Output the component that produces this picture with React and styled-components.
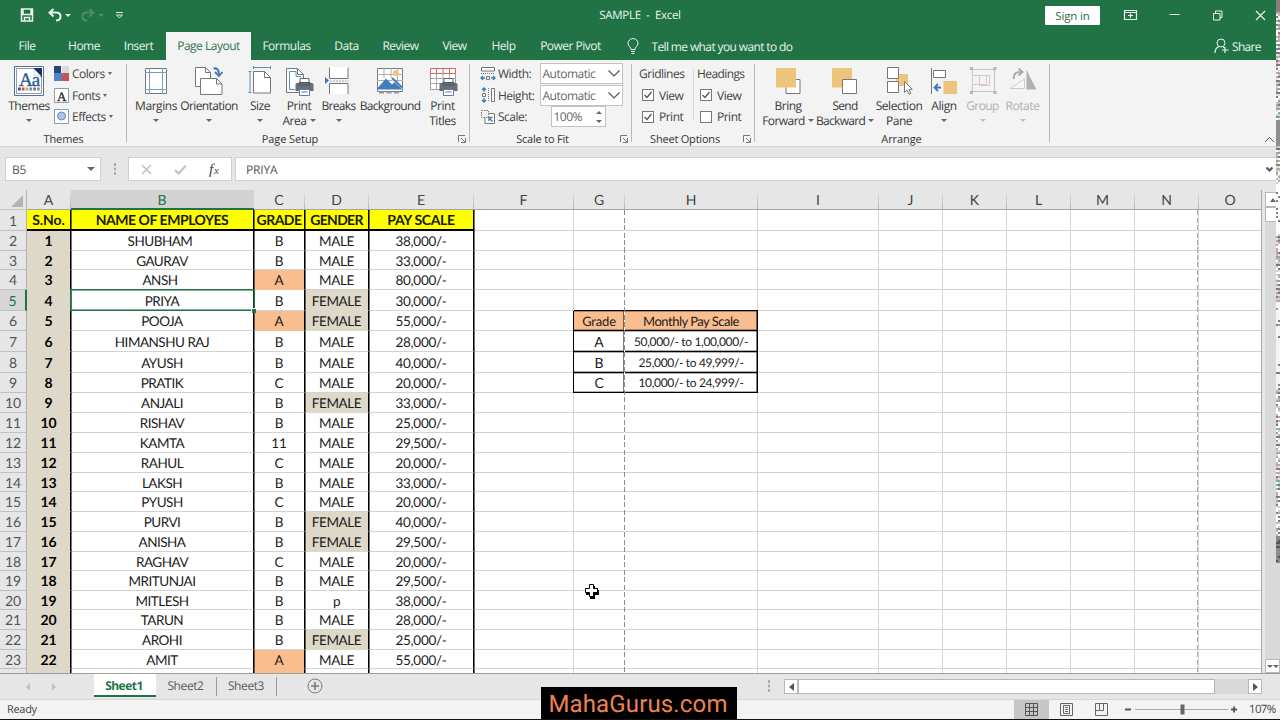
import React from "react";
import styled, { createGlobalStyle, css } from "styled-components";

const ui = `"Open Sans", "Noto Sans", sans-serif`;
const sheetFont = `Lato, "Open Sans", sans-serif`;
const green = "#217346";

const GlobalStyle = createGlobalStyle`
  * {
    box-sizing: border-box;
  }

  html,
  body {
    margin: 0;
    padding: 0;
    overflow: hidden;
  }

  svg {
    display: block;
    flex: none;
  }
`;

const Window = styled.div`
  position: relative;
  width: 1280px;
  height: 720px;
  overflow: hidden;
  display: flex;
  flex-direction: column;
  background: #e6e6e6;
  border-bottom: 1px solid #111;
  font-family: ${ui};
  font-size: 12px;
  color: #333;
  white-space: nowrap;
  text-rendering: geometricPrecision;
`;

/* ---------- title bar ---------- */

const TitleBar = styled.header`
  display: grid;
  grid-template-columns: 560px 160px 1fr;
  align-items: center;
  height: 32px;
  padding-bottom: 2px;
  background: ${green};
  color: #e9f3ec;
`;

const QuickAccess = styled.div`
  display: flex;
  align-items: center;
  padding-left: 20px;
`;

const Title = styled.div`
  text-align: center;
  font-size: 11.5px;
  letter-spacing: -0.3px;
  white-space: pre;
`;

const WindowButtons = styled.div`
  display: flex;
  align-items: center;
  justify-content: flex-end;
  padding-right: 14px;
`;

const SignIn = styled.button`
  width: 55px;
  height: 19px;
  margin-right: 23px;
  padding: 0;
  border: 0;
  border-radius: 1px;
  background: #fff;
  color: #2b6a49;
  font: 11.5px/17px ${ui};
  letter-spacing: -0.15px;
`;

/* ---------- ribbon tabs ---------- */

const TabBar = styled.nav`
  display: flex;
  height: 28px;
  background: ${green};
`;

const Tab = styled.div`
  width: ${(p) => p.$w}px;
  margin-right: ${(p) => p.$gap || 0}px;
  display: flex;
  justify-content: center;
  line-height: 27px;
  letter-spacing: ${(p) => p.$ls ?? -0.5}px;
  color: #e6f2ea;
  ${(p) =>
    p.$active &&
    css`
      background: #f3f3f3;
      color: #35724f;
    `}
`;

const TellMe = styled.div`
  display: flex;
  align-items: center;
  gap: 13px;
  flex: 1;
  padding-left: 13.5px;
  color: #e6f2ea;
  line-height: 27px;
  letter-spacing: -0.63px;
`;

const Share = styled.div`
  display: flex;
  align-items: center;
  gap: 3px;
  width: 66px;
  color: #e6f2ea;
  line-height: 27px;
  letter-spacing: -0.7px;
`;

/* ---------- ribbon ---------- */

const Ribbon = styled.div`
  display: flex;
  height: 87px;
  background: #f3f3f3;
  border-bottom: 1px solid #d4d4d4;
`;

const Group = styled.section`
  position: relative;
  width: ${(p) => p.$w}px;
  display: flex;
  flex-direction: column;
  background: linear-gradient(#b9b9b9, #b9b9b9) right 4px / 1px 78px no-repeat;
`;

const GroupBody = styled.div`
  display: flex;
  height: 71px;
  padding-left: ${(p) => p.$pad ?? 4}px;
`;

const GroupLabel = styled.div`
  height: 15px;
  display: flex;
  justify-content: center;
  padding-right: ${(p) => p.$shift || 0}px;
  font-size: 11px;
  line-height: 17px;
  letter-spacing: ${(p) => p.$ls ?? -0.1}px;
`;

const Launcher = styled.div`
  position: absolute;
  right: 4px;
  bottom: 3px;
`;

const BigButton = styled.div`
  width: ${(p) => p.$w}px;
  flex: none;
  display: flex;
  flex-direction: column;
  align-items: center;
  padding-top: 6px;
  line-height: 15px;
  letter-spacing: ${(p) => p.$ls ?? -0.45}px;
  color: ${(p) => (p.$off ? "#b0b0b0" : "#3a3a3a")};
`;

const ButtonLine = styled.div`
  display: flex;
  align-items: center;
  gap: 3px;
  height: 15px;
`;

const Caret = styled.i`
  flex: none;
  width: 0;
  height: 0;
  border: ${(p) => p.$s || 2.5}px solid transparent;
  border-bottom: 0;
  border-top: ${(p) => (p.$s || 2.5) + 0.5}px solid ${(p) => p.$c || "#666"};
`;

const SmallStack = styled.div`
  width: ${(p) => (p.$w ? `${p.$w}px` : "auto")};
  display: flex;
  flex-direction: column;
  padding-top: 3px;
`;

const SmallRow = styled.div`
  display: flex;
  align-items: center;
  gap: ${(p) => p.$gap ?? 3}px;
  height: 21.5px;
  letter-spacing: ${(p) => p.$ls ?? -0.5}px;
  color: #444;
`;

const Field = styled.div`
  display: flex;
  align-items: center;
  justify-content: space-between;
  width: ${(p) => p.$w || 83}px;
  height: 21px;
  margin-left: ${(p) => p.$ml || 0}px;
  padding: 0 1px 0 1.5px;
  background: #fff;
  border: 1px solid #c3c3c3;
  color: #666;
  letter-spacing: -0.5px;
`;

const Spin = styled.div`
  display: flex;
  flex-direction: column;
  gap: 6px;
  padding-right: 2px;
`;

const OptionColumn = styled.div`
  width: ${(p) => p.$w}px;
  padding: 3px 0 0 ${(p) => p.$pad}px;
`;

const OptionRule = styled.div`
  width: 1px;
  height: 52px;
  margin-top: 9px;
  background: #d9d9d9;
`;

const Box = styled.span`
  width: 12px;
  height: 12px;
  margin-left: 3px;
  margin-right: 2px;
  border: 1px solid #777;
  background: #fff;
`;

const Collapse = styled.div`
  flex: 1;
  display: flex;
  justify-content: flex-end;
  align-items: flex-end;
  padding: 0 5px 3px 0;
`;

/* ---------- formula bar ---------- */

const FormulaBar = styled.div`
  display: flex;
  align-items: center;
  height: 43px;
  padding: 1px 0 0 5px;
`;

const BarBox = styled.div`
  display: flex;
  align-items: center;
  width: ${(p) => p.$w}px;
  height: 24px;
  margin-left: ${(p) => p.$ml || 0}px;
  padding: 0 ${(p) => p.$pr || 5}px 0 ${(p) => p.$pl || 6}px;
  justify-content: space-between;
  background: #fff;
  border: 1px solid #d0d0d0;
  color: #555;
  letter-spacing: -0.2px;
`;

const Dots = styled.div`
  width: ${(p) => p.$w}px;
  height: 12px;
  margin-top: ${(p) => p.$mt || 0}px;
  background: radial-gradient(circle, #a5a5a5 1px, transparent 1.3px) center / 4px 4.5px repeat-y;
`;

/* ---------- sheet ---------- */

const Main = styled.div`
  display: flex;
  height: 483px;
`;

const Sheet = styled.div`
  position: relative;
  width: 1262px;
  height: 483px;
  overflow: hidden;
  border-right: 1px solid #a8a8a8;
`;

const columns = "27px 44px 183px 51px 64px 105px 100px 51px 133px 121px 64px 64px 64px 64px 64px 63px";

const Row = styled.div`
  display: grid;
  grid-template-columns: ${columns};
  height: ${(p) => p.$h}px;
`;

const ColHead = styled.div`
  display: flex;
  align-items: center;
  justify-content: center;
  height: 20px;
  padding-right: 1px;
  background: linear-gradient(#e6e6e6, #b5b5b5) right / 1px 100% no-repeat #e6e6e6;
  border-bottom: 1px solid #a5a5a5;
  color: #444;
  font: 14px ${sheetFont};
  ${(p) =>
    p.$active &&
    css`
      background: #d2d2d2;
      border-bottom: 2px solid ${green};
      color: ${green};
    `}
`;

const Corner = styled.div`
  display: flex;
  justify-content: flex-end;
  align-items: flex-end;
  padding: 0 3px 2px 0;
  height: 20px;
  border-bottom: 1px solid #c3c3c3;
  border-right: 1px solid #b5b5b5;
`;

const RowHead = styled.div`
  display: flex;
  align-items: center;
  justify-content: center;
  padding-top: 1px;
  background: #e6e6e6;
  border-right: 1px solid #b0b0b0;
  border-bottom: 1px solid #c0c0c0;
  color: #555;
  font: 14px/16px ${sheetFont};
  letter-spacing: -0.2px;
  ${(p) =>
    p.$active &&
    css`
      background: #d6d6d6;
      border-right: 2px solid ${green};
      color: ${green};
    `}
`;

const salmon = "#f9be90";
const fills = { A: salmon, FEMALE: "#ddd8c7" };

// $edge and $boxed carry the stacking level, so a heavy line stays above the next cell
const Cell = styled.div`
  display: flex;
  align-items: center;
  justify-content: center;
  min-width: 0;
  height: 100%;
  padding-top: 1px;
  padding-right: ${(p) => p.$shift || 0}px;
  background: ${(p) => p.$fill || "#fff"};
  border-right: 1px solid #d6d6d6;
  border-bottom: 1px solid ${(p) => p.$fill || "#d2d2d2"};
  color: #1c1c1c;
  font: ${(p) => p.$size || 13.5}px/16px ${sheetFont};
  letter-spacing: ${(p) => p.$ls || 0}px;
  ${(p) =>
    p.$edge &&
    css`
      position: relative;
      z-index: ${p.$edge};
      border-right-color: #000;
      box-shadow: 1px 0 0 rgba(0, 0, 0, 0.55);
    `}
  ${(p) =>
    p.$bold &&
    css`
      font-weight: 700;
      font-size: 14px;
      color: #000;
    `}
  ${(p) =>
    p.$head &&
    css`
      background: #ffff00;
      border-bottom: 2px solid #000;
      color: #1a1a00;
    `}
  ${(p) =>
    p.$boxed &&
    css`
      position: relative;
      z-index: ${p.$boxed};
      border-right: 1px solid #000;
      border-bottom: 1px solid #000;
      box-shadow: 0 -1px 0 #000, -1px 0 0 #000, inset 0 1px 0 rgba(0, 0, 0, 0.3), inset -1px 0 0 rgba(0, 0, 0, 0.5),
        inset 0 -1px 0 rgba(0, 0, 0, 0.3);
    `}
`;

const PageBreak = styled.div`
  position: absolute;
  z-index: 6;
  left: ${(p) => p.$x}px;
  top: 20px;
  bottom: 0;
  width: 1px;
  background: repeating-linear-gradient(${(p) => p.$c} 0 5px, #fff 5px 7.5px);
`;

const Selection = styled.div`
  position: absolute;
  z-index: 7;
  left: 70px;
  top: 99px;
  width: 185px;
  height: 22px;
  border: 1px solid ${green};
  box-shadow: inset 0 0 0 1px rgba(33, 115, 70, 0.55);
`;

const FillHandle = styled.div`
  position: absolute;
  z-index: 8;
  left: 251px;
  top: 118px;
  width: 5px;
  height: 5px;
  background: ${green};
  border-left: 1px solid #fff;
  border-top: 1px solid #fff;
`;

const CellCursor = styled.svg`
  position: absolute;
  left: 584px;
  top: 393px;
`;

const VScroll = styled.div`
  display: flex;
  flex-direction: column;
  width: 15px;
  margin: 2px 0 0 3px;
  background: #d9d9d9;
`;

const ScrollPart = styled.div`
  display: flex;
  align-items: center;
  justify-content: center;
  width: ${(p) => p.$w}px;
  height: ${(p) => p.$h}px;
  background: #fff;
  border: 1px solid #b8b8b8;
`;

const Spacer = styled.div`
  flex: 1;
`;

/* ---------- bottom ---------- */

const SheetBar = styled.div`
  display: flex;
  height: 26px;
  border-top: 1px solid #9a9f9a;
`;

const TabArrows = styled.div`
  display: flex;
  align-items: center;
  gap: 22px;
  width: 94px;
  padding-left: 25px;
`;

const SheetTab = styled.div`
  width: ${(p) => p.$w}px;
  height: 24px;
  display: flex;
  justify-content: center;
  padding-right: 2px;
  line-height: 24px;
  letter-spacing: -0.4px;
  color: #5a5a5a;
  background: linear-gradient(#999, #999) right 3px / 1px 19px no-repeat;
  ${(p) =>
    p.$active &&
    css`
      height: 23px;
      background: #fff;
      border-bottom: 2px solid ${green};
      color: ${green};
      font-weight: 700;
      letter-spacing: -0.5px;
    `}
`;

const AddSheet = styled.div`
  width: 485px;
  padding: 4px 0 0 30px;
`;

const HScroll = styled.div`
  display: flex;
  width: 478px;
  height: 15px;
  margin: 5px 0 0 8px;
  background: #d9d9d9;
`;

const StatusBar = styled.footer`
  display: flex;
  align-items: center;
  height: 20px;
  background: #f3f3f3;
  border-top: 1px solid #d6d6d6;
`;

const Ready = styled.div`
  flex: 1;
  padding-left: 7px;
  font-size: 11px;
  letter-spacing: -0.3px;
  color: #444;
`;

const ViewButton = styled.div`
  display: flex;
  align-items: center;
  justify-content: center;
  width: 35px;
  height: 19px;
  background: ${(p) => (p.$active ? "#c6c6c6" : "transparent")};
`;

const Zoom = styled.div`
  display: flex;
  align-items: center;
  gap: 10px;
  width: 161px;
  padding-left: 2px;
  font-size: 11.5px;
  letter-spacing: -0.7px;
  color: #444;
`;

const Watermark = styled.div`
  position: absolute;
  left: 541px;
  top: 687px;
  width: 196px;
  height: 33px;
  background: #000;
  color: #ee8350;
  text-align: center;
  padding-right: 2px;
  font: 24px/34px Roboto, sans-serif;
  letter-spacing: 0.15px;
`;

const Edge = styled.div`
  position: absolute;
  right: 0;
  top: 0;
  width: 4px;
  height: 563px;
  display: flex;
`;

const EdgeLine = styled.div`
  flex: 1;
`;

/* ---------- icons ---------- */

const Icon = ({ w = 32, h = 32, children, ...rest }) => (
  <svg width={w} height={h} viewBox={`0 0 ${w} ${h}`} fill="none" stroke="#777" {...rest}>
    {children}
  </svg>
);

const Spaced = styled.span`
  display: flex;
  margin-left: ${(p) => p.$ml}px;
`;

const Printer = () => (
  <g>
    <path d="M17 18v-5.5h9V18" fill="#fff" stroke="#666" />
    <path d="M12.5 18.5q0-1.5 1.5-1.5h15q1.5 0 1.5 1.5V25h-18z" fill="#6a6e75" stroke="none" />
    <path d="M16 16.5h11v2.5H16z" fill="#6a6e75" stroke="#4d5560" />
    <path d="M16.5 23.5h10v6h-10z" fill="#fff" stroke="#5e7fa5" />
    <path d="M18.5 26h6" stroke="#5e7fa5" />
  </g>
);

const ThemesIcon = () => (
  <Icon>
    <path d="M1.5.5h29v29h-29z" fill="#fff" stroke="#56719a" />
    <path d="M3.5 2.5h25v25h-25z" fill="#fff" stroke="#8a9bb5" />
    <path d="M21 2.5h7.500V11z" fill="#1f2f66" stroke="#1f2f66" />
    <path d="M21 3v7h7z" fill="#fff" stroke="#a3b1c8" strokeWidth=".5" />
    <text x="6" y="19.5" fontFamily="Liberation Serif, serif" fontSize="19" letterSpacing="-1" fill="#2e5c92" stroke="#2e5c92" strokeWidth=".4">Aa</text>
    {["#35507e", "#c25550", "#e0a440", "#5d91c9", "#8a61a3", "#6fa058"].map((c, i) => (
      <rect key={c} x={5 + i * 3.8} y="21.5" width="2.7" height="3" fill={c} stroke="none" />
    ))}
  </Icon>
);

const MarginsIcon = () => (
  <Icon>
    <path d="M5.5 2.5h21v25h-21z" fill="#fff" />
    <path d="M9.5 2v26M22.5 2v26M5 6.5h22M5 23.5h22" stroke="#6f9fc9" />
  </Icon>
);

const OrientationIcon = () => (
  <Icon>
    <path d="M2.5 1.5h10l5 5v14h-15z" fill="#fff" />
    <path d="M12.5 1.5v5h5" />
    <path d="M7.5 12.5h16l5.500 5.500v10.500H7.500z" fill="#fff" />
    <path d="M23.5 12.5v5.500H29" />
    <path d="M20.5 2.5q5.500-1 5.500 6" stroke="#4379b5" strokeWidth="2" />
    <path d="M22 6l4 4 3.5-4" stroke="#4379b5" strokeWidth="1.8" />
  </Icon>
);

const SizeIcon = () => (
  <Icon>
    <path d="M9.5 5.5h11l6 6v15.500h-17z" fill="#fff" />
    <path d="M20.5 5.5v6h6" />
    <path d="M9 1.5h18M9.500 0v3M26.500 0v3M6 5v22M4.500 5.500h3M4.500 26.500h3" stroke="#5b8ec2" />
  </Icon>
);

const PrintAreaIcon = () => (
  <Icon>
    <path d="M3.5 2.5h11l6 6v18h-17z" fill="#fff" />
    <path d="M14.5 2.5v6h6" />
    <path d="M12 23.500H6.500v-18H13v5h5" stroke="#5b8ec2" />
    <Printer />
  </Icon>
);

const BreaksIcon = () => (
  <Icon>
    <path d="M7 1h18v11.500H7zM7 17.500h18V28H7z" fill="#fff" stroke="none" />
    <path d="M6.500 1.500V12.500h18.500V1.500M6.500 28V17.500h18.500V28" />
    <path d="M7 15h19" stroke="#aaa" strokeDasharray="2 1" />
    <path d="M2 11v7l4-3.500z" fill="#3f78b5" stroke="none" />
  </Icon>
);

const BackgroundIcon = () => (
  <Icon>
    <path d="M3.5 2.5h25v23h-25z" fill="#fff" />
    <path d="M3 8.500h26M3 14.500h26M10 2v10M17 2v10M23.500 2v15" stroke="#aaa" />
    <circle cx="22" cy="7" r="3" fill="#efc480" stroke="none" />
    <path d="M4 23.500v-2l8-9 6 6 3-3 7.500 7v1z" fill="#417ebb" stroke="none" />
    <path d="M15.500 11.500l13 11.500" stroke="#fff" />
    <path d="M18 12l10 9.500" stroke="#417ebb" strokeWidth="2" />
    <path d="M5 26.500h5M12.500 26.500h5M20 26.500h5" stroke="#999" strokeWidth="2" />
  </Icon>
);

const PrintTitlesIcon = () => (
  <Icon>
    <path d="M3.5 2.5h25v21h-25z" fill="#fff" stroke="#999" />
    <path d="M3 12.500h26M3 17.500h26M9.500 8v16M16 8v16M22.500 8v16" stroke="#aaa" />
    <path d="M3.5 2.5h25v5h-25zM9.500 2v5M16 2v5M22.500 2v5" stroke="#cf6a5c" />
    <Printer />
  </Icon>
);

const BringIcon = () => (
  <Icon>
    <path d="M14 13.500h14v14H14z" fill="#fff" />
    <path d="M4 2h20v19.500H4z" fill="#edc47b" stroke="none" />
  </Icon>
);

const SendIcon = () => (
  <Icon>
    <path d="M3 2h20v19.500H3z" fill="#edc47b" stroke="none" />
    <path d="M13.500 13.500h14v14h-14z" fill="#fff" />
  </Icon>
);

const SelectionIcon = () => (
  <Icon>
    <path d="M13 8h12v12H13z" fill="#edc47b" stroke="none" />
    <path d="M4.500 1.500h11v11h-11zM4.500 15.500h11v11h-11z" fill="#fff" />
    <path d="M21.500 15.500v11l2.600-2.400 2 4.200 1.800-.9-2-4h3.400z" fill="#fff" />
  </Icon>
);

const AlignIcon = () => (
  <Icon>
    <path d="M3.500 2v26" />
    <path d="M5.500 4.500h12v7h-12z" fill="#fff" />
    <path d="M15.500 15H29v13H15.500z" fill="#edc47b" stroke="none" />
    <path d="M13 21.500H7M10 18l-3.500 3.500L10 25" stroke="#3f78b5" strokeWidth="1.8" />
  </Icon>
);

const GroupIcon = () => (
  <Icon stroke="#c5c5c5">
    <path d="M5.500 3.500h22v22h-22z" />
    <path d="M5.500 9.500h14v9h-14zM12.500 9.500h10v10h-10z" stroke="#d8c5d8" />
    <path d="M3 1h3v3H3zM26.500 1h3v3h-3zM3 25h3v3H3zM26.500 25h3v3h-3z" fill="#b5b5b5" stroke="none" />
  </Icon>
);

const RotateIcon = () => (
  <Icon stroke="#aaa">
    <path d="M19.500 4v19.500h10z" fill="#b0b0b0" stroke="none" />
    <path d="M3.500 22.500L17.500 13v9.500z" fill="#f6f6f6" stroke="#ccc" />
    <path d="M7 13q-1-7 6-7h1.500M11.500 2.500L15.500 6l-4 3.500" strokeWidth="2" />
  </Icon>
);

const Launch = () => (
  <Launcher>
    <Icon w={8} h={8} stroke="#777">
      <path d="M.5 7V.5H7M3 3l4 4M7.500 3v4.500H3" />
    </Icon>
  </Launcher>
);

const Check = ({ on }) => (
  <Box>
    {on && (
      <Icon w={10} h={10} stroke="#555">
        <path d="M1.500 5l2.500 2.500L8.500 2" strokeWidth="1.3" />
      </Icon>
    )}
  </Box>
);

const Chevron = () => (
  <Icon w={14} h={9} stroke="#555">
    <path d="M1.500 1.500L7 7l5.500-5.500" strokeWidth="1.2" />
  </Icon>
);

const UpCaret = styled(Caret)`
  transform: rotate(180deg);
`;

/* ---------- data ---------- */

const letters = "ABCDEFGHIJKLMNO".split("");
const rowHeights = [21, 20, 19, 20, 21, 20, 21, 21, 20, 20, 20, 20, 20, 19, 20, 20, 20, 19, 20, 19, 20, 20, 19, 20];

const employees = [
  ["SHUBHAM", "B", "MALE", "38,000/-"],
  ["GAURAV", "B", "MALE", "33,000/-"],
  ["ANSH", "A", "MALE", "80,000/-"],
  ["PRIYA", "B", "FEMALE", "30,000/-"],
  ["POOJA", "A", "FEMALE", "55,000/-"],
  ["HIMANSHU RAJ", "B", "MALE", "28,000/-"],
  ["AYUSH", "B", "MALE", "40,000/-"],
  ["PRATIK", "C", "MALE", "20,000/-"],
  ["ANJALI", "B", "FEMALE", "33,000/-"],
  ["RISHAV", "B", "MALE", "25,000/-"],
  ["KAMTA", "11", "MALE", "29,500/-"],
  ["RAHUL", "C", "MALE", "20,000/-"],
  ["LAKSH", "B", "MALE", "33,000/-"],
  ["PYUSH", "C", "MALE", "20,000/-"],
  ["PURVI", "B", "FEMALE", "40,000/-"],
  ["ANISHA", "B", "FEMALE", "29,500/-"],
  ["RAGHAV", "C", "MALE", "20,000/-"],
  ["MRITUNJAI", "B", "MALE", "29,500/-"],
  ["MITLESH", "B", "p", "38,000/-"],
  ["TARUN", "B", "MALE", "28,000/-"],
  ["AROHI", "B", "FEMALE", "25,000/-"],
  ["AMIT", "A", "MALE", "55,000/-"],
];

const scale = {
  6: ["Grade", "Monthly Pay Scale"],
  7: ["A", "50,000/- to 1,00,000/-"],
  8: ["B", "25,000/- to 49,999/-"],
  9: ["C", "10,000/- to 24,999/-"],
};

const edgeColors = ["#8d7f78", "#ffffff", "#b9a7b0", "#e4e4d8", "#777788", "#c9d6c0", "#ffffff", "#d9a8b4", "#7fb0a8", "#ffffff"];

const edgeGradient = (seed) => {
  let n = seed;
  const stops = [];
  for (let y = 0; y < 563; y += 2) {
    n = (n * 1103 + 12345) % 65536;
    let c = edgeColors[n % edgeColors.length];
    if (y < 12) c = "#8d7f78";
    if (y > 118 && y < 146) c = "#8e8e8e";
    if (y > 185 && y < 235 && n % 5) c = "#fdfdfd";
    if (y > 300 && y < 390 && n % 6) c = "#f4f4f4";
    if (y > 535) c = n % 3 ? "#8a8a8a" : "#55555f";
    stops.push(`${c} ${y}px ${y + 2}px`);
  }
  return `linear-gradient(${stops.join(",")})`;
};

const SheetRow = ({ n, h }) => {
  const e = employees[n - 2] || ["", "", "", ""];
  const box = scale[n];
  const boxFill = n === 6 ? salmon : undefined;
  return (
    <Row $h={h}>
      <RowHead $active={n === 5}>{n < 24 && n}</RowHead>
      {n === 1 ? (
        <>
          <Cell $head $bold $edge={5} $ls={-0.1}>S.No.</Cell>
          <Cell $head $bold $edge={4} $ls={-0.45}>NAME OF EMPLOYES</Cell>
          <Cell $head $bold $edge={3} $ls={-0.55}>GRADE</Cell>
          <Cell $head $bold $edge={2} $ls={-0.7}>GENDER</Cell>
          <Cell $head $bold $edge={1} $ls={-0.35}>PAY SCALE</Cell>
        </>
      ) : (
        <>
          <Cell $bold $edge={5} $fill="#ddd8c7">{n < 24 && n - 1}</Cell>
          <Cell $edge={4} $ls={-0.5} $shift={n === 2 || n === 4 ? 4 : 0}>{e[0]}</Cell>
          <Cell $edge={3} $fill={n === 24 ? salmon : fills[e[1]]}>{e[1]}</Cell>
          <Cell $edge={2} $ls={-0.4} $fill={fills[e[2]]}>{e[2]}</Cell>
          <Cell $edge={1} $ls={-0.3}>{e[3]}</Cell>
        </>
      )}
      <Cell />
      {box ? (
        <>
          <Cell $boxed={2} $fill={boxFill} $size={n === 6 ? 13 : 14} $ls={-0.2}>{box[0]}</Cell>
          <Cell $boxed={1} $fill={boxFill} $size={n === 6 ? 13 : 12} $ls={n === 6 ? -0.5 : -0.35}>{box[1]}</Cell>
        </>
      ) : (
        <>
          <Cell />
          <Cell />
        </>
      )}
      {letters.slice(8).map((l) => (
        <Cell key={l} />
      ))}
    </Row>
  );
};

const Big = ({ icon, w, a, b, caret, off, ls }) => (
  <BigButton $w={w} $off={off} $ls={ls}>
    {icon}
    <ButtonLine>{a}</ButtonLine>
    <ButtonLine>
      {b}
      {caret && <Caret $s={3} $c={off ? "#c0c0c0" : undefined} />}
    </ButtonLine>
  </BigButton>
);

export default function App() {
  return (
    <Window>
      <GlobalStyle />
      <TitleBar>
        <QuickAccess>
          <Icon w={14} h={14} stroke="#e9f3ec">
            <path d="M1.5 1h11v12h-11zM3 1.500v5h8v-5M4.500 13V9.500h5V13" strokeWidth="1.5" />
          </Icon>
          <Spaced $ml={14}>
            <Icon w={14} h={14} stroke="#e9f3ec">
              <path d="M5.500 1L1.500 4.500l4 4M2 4.500h6q4.500 0 4.500 4T8 12.500" strokeWidth="2" />
            </Icon>
          </Spaced>
          <Spaced $ml={3}>
            <Caret $s={3} $c="#dcebe1" />
          </Spaced>
          <Spaced $ml={10}>
            <Icon w={14} h={14} stroke="#4b8f69">
              <path d="M8.500 1l4 3.500-4 4M12 4.500H6q-4.500 0-4.500 4T6 12.500" strokeWidth="2" />
            </Icon>
          </Spaced>
          <Spaced $ml={3}>
            <Caret $s={3} $c="#4b8f69" />
          </Spaced>
          <Spaced $ml={11}>
            <Icon w={9} h={9} stroke="#dcebe1">
              <path d="M1 1.500h7M1.500 4l3 3 3-3z" />
            </Icon>
          </Spaced>
        </QuickAccess>
        <Title>{"SAMPLE  -  Excel"}</Title>
        <WindowButtons>
          <SignIn>Sign in</SignIn>
          <Icon w={15} h={12} stroke="#e9f3ec">
            <path d="M1.500 1.500h12v9h-12zM1.500 3.500h12M7.500 9V4.500M5 6.500h5" strokeWidth="1.2" />
          </Icon>
          <Spaced $ml={31}>
            <Icon w={11} h={11} stroke="#e9f3ec">
              <path d="M.5 4.500h10" />
            </Icon>
          </Spaced>
          <Spaced $ml={32}>
            <Icon w={11} h={11} stroke="#e9f3ec">
              <path d="M1.500 3.500h6.500V10H1.500zM3.500 3.500V1h6.500v6.500H8" />
            </Icon>
          </Spaced>
          <Spaced $ml={32}>
            <Icon w={11} h={11} stroke="#e9f3ec">
              <path d="M1 1l9 9M10 1l-9 9" strokeWidth="1.2" />
            </Icon>
          </Spaced>
        </WindowButtons>
      </TitleBar>

      <TabBar>
        <Tab $w={54} $gap={2}>File</Tab>
        <Tab $w={56}>Home</Tab>
        <Tab $w={53} $gap={1}>Insert</Tab>
        <Tab $w={85} $active>Page Layout</Tab>
        <Tab $w={71}>Formulas</Tab>
        <Tab $w={49}>Data</Tab>
        <Tab $w={59}>Review</Tab>
        <Tab $w={49}>View</Tab>
        <Tab $w={49}>Help</Tab>
        <Tab $w={85}>Power Pivot</Tab>
        <TellMe>
          <Icon w={12} h={17} stroke="#e6f2ea">
            <path d="M4 11.500Q4 10 2.500 8.500 1 7 1 5.500a5 5 0 0110 0Q11 7 9.500 8.500 8 10 8 11.500zM4 13.500h4M4.500 15.500h3" />
          </Icon>
          Tell me what you want to do
        </TellMe>
        <Share>
          <Icon w={15} h={16} stroke="#e6f2ea">
            <circle cx="7" cy="5" r="4" />
            <path d="M1 15q0-5 4-6.500M9 9l2 1M11 9v6M8 12h6.500" strokeWidth="1.2" />
          </Icon>
          Share
        </Share>
      </TabBar>

      <Ribbon>
        <Group $w={127}>
          <GroupBody>
            <Big icon={<ThemesIcon />} w={50} a="Themes" caret />
            <SmallStack>
              <SmallRow>
                <Icon w={15} h={15} stroke="none">
                  <path d="M0 0h7v7H0z" fill="#26457a" />
                  <path d="M8 0h7v7H8z" fill="#d8dbe0" />
                  <path d="M0 7h8v8H0z" fill="#4f84c4" />
                  <path d="M8 7h7v8H8z" fill="#c35450" />
                </Icon>
                Colors <Caret />
              </SmallRow>
              <SmallRow>
                <Icon w={15} h={15} stroke="#8d9bb0">
                  <path d="M.5.5h14v14H.5z" fill="#fff" />
                  <text x="3" y="12.5" fontFamily="Liberation Serif, serif" fontSize="13" fill="#222" stroke="#222" strokeWidth=".3">A</text>
                </Icon>
                Fonts <Caret />
              </SmallRow>
              <SmallRow>
                <Icon w={15} h={15} stroke="#8d9bb0">
                  <path d="M.5.5h14v14H.5z" fill="#fff" />
                  <circle cx="7.5" cy="7" r="4" fill="#a9c4ea" stroke="#6b86c0" />
                </Icon>
                Effects <Caret />
              </SmallRow>
            </SmallStack>
          </GroupBody>
          <GroupLabel>Themes</GroupLabel>
        </Group>

        <Group $w={343}>
          <GroupBody>
            <Big icon={<MarginsIcon />} w={50} a="Margins" caret />
            <Big icon={<OrientationIcon />} w={56} a="Orientation" caret ls={-0.6} />
            <Big icon={<SizeIcon />} w={46} a="Size" caret />
            <Big icon={<PrintAreaIcon />} w={32} a="Print" b="Area" caret />
            <Big icon={<BreaksIcon />} w={47} a="Breaks" caret ls={-0.65} />
            <Big icon={<BackgroundIcon />} w={56} a="Background" ls={-0.65} />
            <Big icon={<PrintTitlesIcon />} w={49} a="Print" b="Titles" />
          </GroupBody>
          <GroupLabel $shift={17}>Page Setup</GroupLabel>
          <Launch />
        </Group>

        <Group $w={162}>
          <GroupBody $pad={10}>
            <SmallStack $w={60}>
              <SmallRow $gap={2}>
                <Icon w={16} h={16}>
                  <path d="M1.500 5V1.500h13V5z" fill="#fff" />
                  <path d="M1 7.500h14" strokeDasharray="1 1" />
                  <path d="M6.500 10.500h3v3h-3z" />
                  <path d="M5 12H1.500M3 10l-2 2 2 2M11 12h3.500M13 10l2 2-2 2" stroke="#3f78b5" strokeWidth="1.3" />
                </Icon>
                Width:
              </SmallRow>
              <SmallRow $gap={2}>
                <Icon w={16} h={16}>
                  <path d="M11.500 1.500h3v13h-3z" fill="#fff" />
                  <path d="M8.500 1v14" strokeDasharray="1 1" />
                  <path d="M2.500 6.500h3v3h-3z" />
                  <path d="M4 5V1.500M2 3l2-2 2 2M4 11v3.500M2 13l2 2 2-2" stroke="#3f78b5" strokeWidth="1.3" />
                </Icon>
                Height:
              </SmallRow>
              <SmallRow $gap={2}>
                <Icon w={16} h={16}>
                  <path d="M5 5V14.500h9.500V4.500H9" fill="#fff" />
                  <path d="M1.500 1.500h7v7h-7z" fill="#f3f3f3" strokeDasharray="1.5 1" />
                  <path d="M12.500 12.500L9 9M9 12V8.500h3.500" stroke="#3f78b5" strokeWidth="1.3" />
                </Icon>
                Scale:
              </SmallRow>
            </SmallStack>
            <SmallStack>
              <SmallRow>
                <Field>Automatic <Chevron /></Field>
              </SmallRow>
              <SmallRow>
                <Field>Automatic <Chevron /></Field>
              </SmallRow>
              <SmallRow>
                <Field $w={55} $ml={11}>
                  100%
                  <Spin>
                    <UpCaret $s={3} />
                    <Caret $s={3} />
                  </Spin>
                </Field>
              </SmallRow>
            </SmallStack>
          </GroupBody>
          <GroupLabel $shift={17} $ls={-0.2}>Scale to Fit</GroupLabel>
          <Launch />
        </Group>

        <Group $w={123}>
          <GroupBody $pad={0}>
            <OptionColumn $w={61} $pad={7}>
              <SmallRow $ls={-0.5}>Gridlines</SmallRow>
              <SmallRow><Check on />View</SmallRow>
              <SmallRow><Check on />Print</SmallRow>
            </OptionColumn>
            <OptionRule />
            <OptionColumn $w={60} $pad={3}>
              <SmallRow $ls={-0.6}>Headings</SmallRow>
              <SmallRow><Check on />View</SmallRow>
              <SmallRow><Check />Print</SmallRow>
            </OptionColumn>
          </GroupBody>
          <GroupLabel $shift={17} $ls={-0.2}>Sheet Options</GroupLabel>
          <Launch />
        </Group>

        <Group $w={295}>
          <GroupBody>
            <Big icon={<BringIcon />} w={58} a="Bring" b="Forward" caret ls={-0.55} />
            <Big icon={<SendIcon />} w={56} a="Send" b="Backward" caret ls={-0.7} />
            <Big icon={<SelectionIcon />} w={52} a="Selection" b="Pane" />
            <Big icon={<AlignIcon />} w={38} a="Align" caret />
            <Big icon={<GroupIcon />} w={39} a="Group" caret off ls={-0.6} />
            <Big icon={<RotateIcon />} w={41} a="Rotate" caret off />
          </GroupBody>
          <GroupLabel $shift={2}>Arrange</GroupLabel>
        </Group>
        <Collapse>
          <Icon w={11} h={7} stroke="#555">
            <path d="M1 6l4.500-4.500L10 6" />
          </Icon>
        </Collapse>
      </Ribbon>

      <FormulaBar>
        <BarBox $w={96}>
          B5 <Caret $s={4} />
        </BarBox>
        <Dots $w={27} />
        <BarBox $w={104} $pl={12} $pr={11}>
          <Icon w={11} h={11} stroke="#c0c0c0">
            <path d="M1 1l9 9M10 1l-9 9" strokeWidth="1.5" />
          </Icon>
          <Icon w={13} h={11} stroke="#c0c0c0">
            <path d="M1 6l3.500 3.500L12 1.500" strokeWidth="2" />
          </Icon>
          <Icon w={12} h={15} stroke="none" fill="#444">
            <text x="1" y="12" fontFamily="Liberation Serif, serif" fontStyle="italic" fontSize="15">f</text>
            <text x="6" y="12" fontFamily="Liberation Serif, serif" fontStyle="italic" fontSize="11">x</text>
          </Icon>
        </BarBox>
        <BarBox $w={1045} $ml={3} $pl={10} $pr={5}>
          PRIYA
          <Icon w={9} h={7} stroke="#555">
            <path d="M1.500 1.500l3 3 3-3" strokeWidth="2" />
          </Icon>
        </BarBox>
      </FormulaBar>

      <Main>
        <Sheet>
          <Row $h={20}>
            <Corner>
              <Icon w={12} h={12} stroke="none">
                <path d="M12 0v12H0z" fill="#b3b3b3" />
              </Icon>
            </Corner>
            {letters.map((l) => (
              <ColHead key={l} $active={l === "B"}>{l}</ColHead>
            ))}
          </Row>
          {rowHeights.map((h, i) => (
            <SheetRow key={i} n={i + 1} h={h} />
          ))}
          <PageBreak $x={624} $c="#8c8c8c" />
          <PageBreak $x={1197} $c="#aaa" />
          <Selection />
          <FillHandle />
          <CellCursor width="16" height="16" viewBox="0 0 16 16">
            <path d="M6 3h5v4h4v5h-4v4H6v-4H2V7h4z" fill="#000" />
            <path d="M5.500 1.500h4v4h4v4h-4v4h-4v-4h-4v-4h4z" fill="#fff" stroke="#000" />
          </CellCursor>
        </Sheet>
        <VScroll>
          <ScrollPart $w={15} $h={15}>
            <UpCaret $s={3.5} />
          </ScrollPart>
          <ScrollPart $w={15} $h={15} />
          <Spacer />
          <ScrollPart $w={15} $h={14}>
            <Caret $s={3} />
            <Caret $s={3} />
          </ScrollPart>
        </VScroll>
      </Main>

      <SheetBar>
        <TabArrows>
          <Icon w={5} h={8} stroke="none">
            <path d="M5 0v8L1 4z" fill="#c0c0c0" />
          </Icon>
          <Icon w={5} h={8} stroke="none">
            <path d="M0 0v8l4-4z" fill="#c0c0c0" />
          </Icon>
        </TabArrows>
        <SheetTab $w={62} $active>Sheet1</SheetTab>
        <SheetTab $w={61}>Sheet2</SheetTab>
        <SheetTab $w={60}>Sheet3</SheetTab>
        <AddSheet>
          <Icon w={16} h={16}>
            <circle cx="8" cy="8" r="7" />
            <path d="M8 4v8M4 8h8" strokeWidth="1.5" />
          </Icon>
        </AddSheet>
        <Dots $w={14} $mt={6} />
        <HScroll>
          <ScrollPart $w={14} $h={15}>
            <Icon w={5} h={8} stroke="none">
              <path d="M5 0v8L0 4z" fill="#555" />
            </Icon>
          </ScrollPart>
          <ScrollPart $w={417} $h={15} />
          <Spacer />
          <ScrollPart $w={14} $h={15}>
            <Icon w={5} h={8} stroke="none">
              <path d="M0 0v8l5-4z" fill="#555" />
            </Icon>
          </ScrollPart>
        </HScroll>
      </SheetBar>

      <StatusBar>
        <Ready>Ready</Ready>
        <ViewButton $active>
          <Icon w={13} h={13} stroke="#555">
            <path d="M.5.5h12v12H.5zM4.500 0v13M8.500 0v13M0 4.500h13M0 8.500h13" />
          </Icon>
        </ViewButton>
        <ViewButton>
          <Icon w={13} h={13} stroke="#666">
            <path d="M.5.5h12v12H.5zM3.500 2.500h6v8h-6zM5 4.500h3M5 6.500h3M5 8.500h3" />
          </Icon>
        </ViewButton>
        <ViewButton>
          <Icon w={13} h={13} stroke="#666">
            <path d="M.5.5h12v12H.5zM4.500 0v7.500H.5M4.500 7.500h4V0" />
          </Icon>
        </ViewButton>
        <Zoom>
          <Icon w={118} h={13} stroke="#555">
            <path d="M4 6.500h6M110 6.500h6M113 3.500v6" strokeWidth="1.8" />
            <path d="M14 6.500h93" stroke="#aaa" />
            <path d="M59.500 1.500h4v10h-4z" fill="#666" stroke="none" />
          </Icon>
          107%
        </Zoom>
      </StatusBar>

      <Watermark>MahaGurus.com</Watermark>
      <Edge>
        <EdgeLine style={{ background: edgeGradient(7) }} />
        <EdgeLine style={{ background: edgeGradient(311) }} />
      </Edge>
    </Window>
  );
}
